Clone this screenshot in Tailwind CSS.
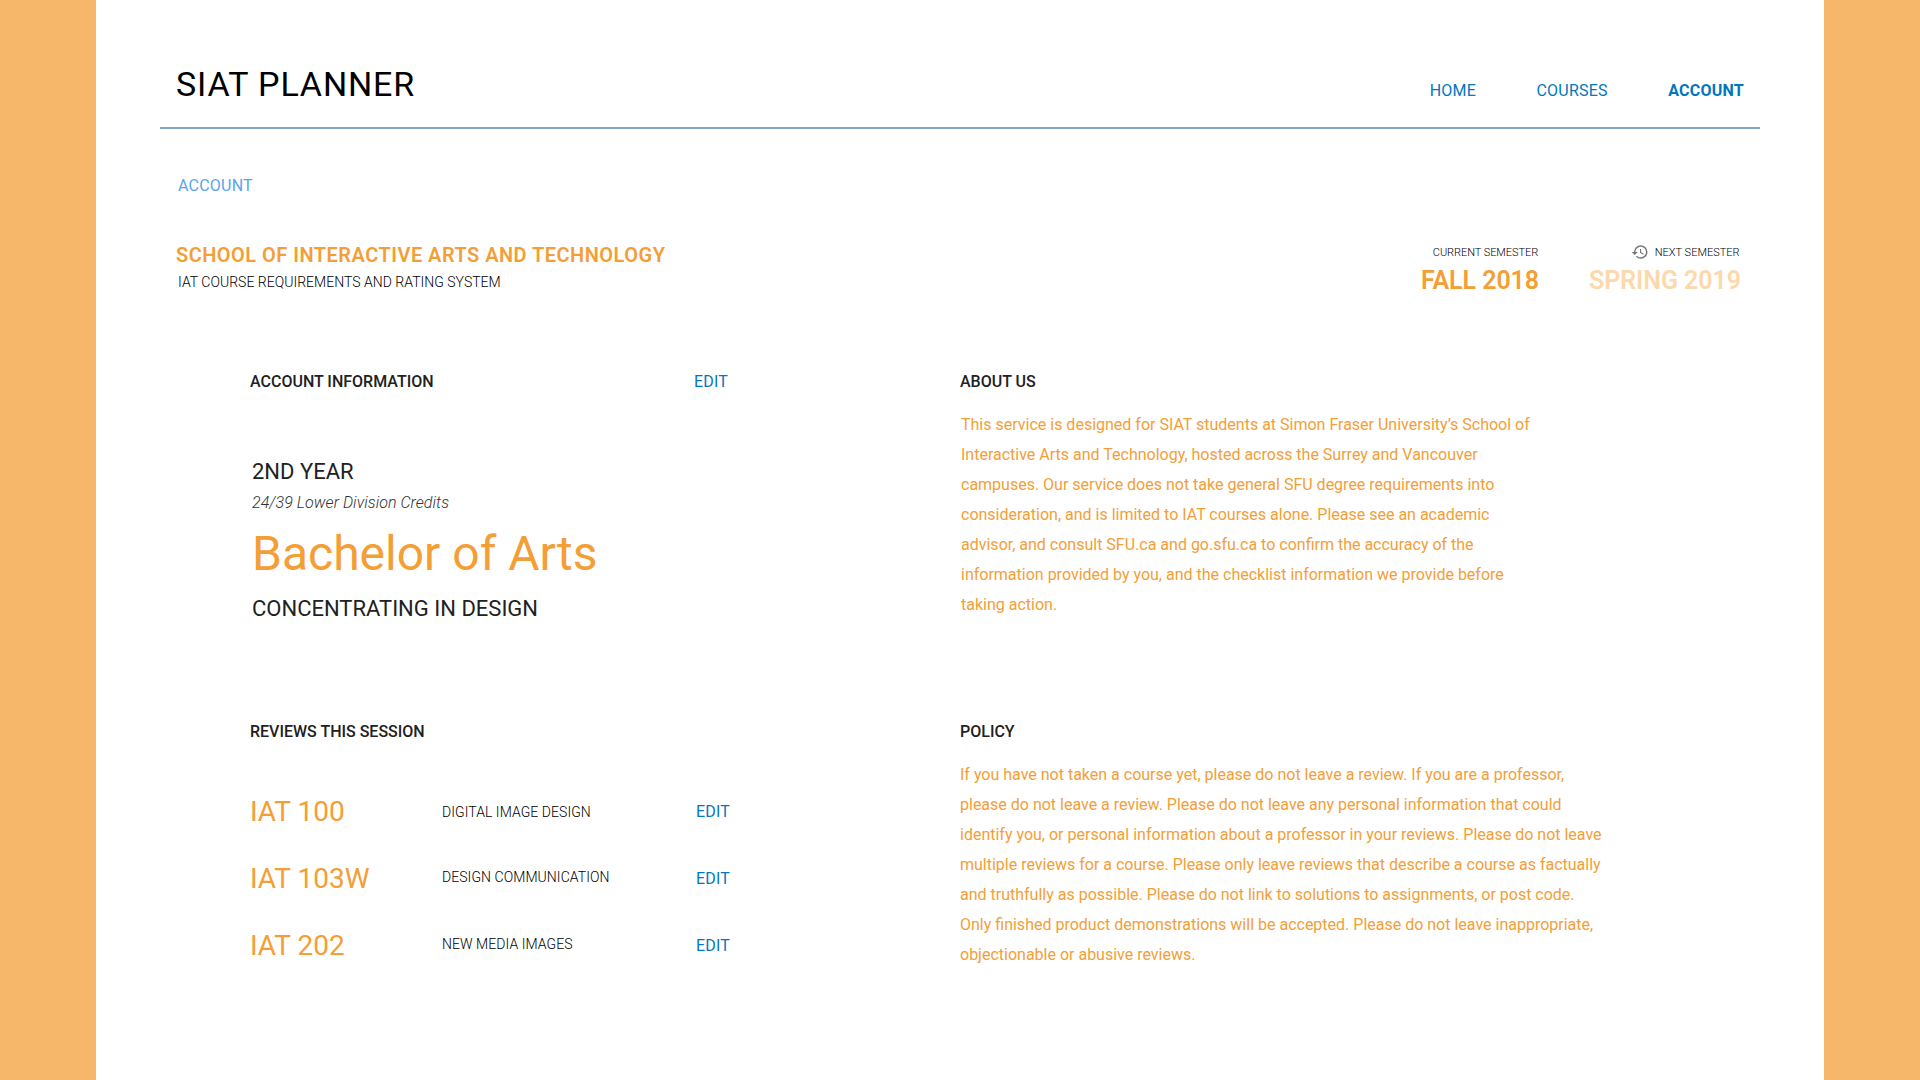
<!DOCTYPE html>
<html lang="en">
<head>
<meta charset="utf-8">
<title>SIAT Planner</title>
<script src="https://cdn.jsdelivr.net/npm/@tailwindcss/browser@4"></script>
</head>
<body class="h-screen overflow-hidden bg-[#f7b76b] px-24 font-['Roboto',sans-serif] text-[#212121]">
<div class="h-full bg-white px-16">
  <header class="flex h-[129px] items-baseline justify-between border-b-2 border-[#7fa6c5] px-4 pt-16">
    <h1 class="text-[34px] leading-10 tracking-[0.85px] text-black">SIAT PLANNER</h1>
    <nav class="flex gap-[60.5px] text-base leading-6 tracking-[0.2px] text-[#0277bd]">
      <a>HOME</a>
      <a>COURSES</a>
      <a class="font-bold tracking-[0.25px]">ACCOUNT</a>
    </nav>
  </header>

  <p class="mt-[45px] pl-[18px] text-base leading-6 tracking-[0.22px] text-[#5aa4ee]">ACCOUNT</p>

  <section class="mt-[43px] flex h-[51px] justify-between pr-[19px] pl-4">
    <div>
      <h2 class="text-xl leading-7 font-semibold tracking-[0.47px] text-[#f49e36]">SCHOOL OF INTERACTIVE ARTS AND TECHNOLOGY</h2>
      <p class="mt-[3px] pl-0.5 text-sm leading-5 font-light tracking-[0.02px] text-black">IAT COURSE REQUIREMENTS AND RATING SYSTEM</p>
    </div>
    <div class="flex gap-[50px] pt-1 text-right">
      <div>
        <p class="pr-px text-[11px] leading-4 font-light tracking-[-0.06px] text-black">CURRENT SEMESTER</p>
        <p class="mt-1 text-[25px] leading-8 font-semibold tracking-[-0.05px] text-[#f49e36]">FALL 2018</p>
      </div>
      <div>
        <div class="flex h-4 items-center justify-end gap-1.5 pr-[1.5px]">
          <svg class="mb-0.5 size-[18px]" viewBox="0 0 24 24" fill="#757575"><path d="M13 3a9 9 0 0 0-9 9H1l3.89 3.89.07.14L9 12H6c0-3.87 3.13-7 7-7s7 3.13 7 7-3.13 7-7 7c-1.93 0-3.68-.79-4.94-2.06l-1.42 1.42A8.954 8.954 0 0 0 13 21a9 9 0 0 0 0-18zm-1 5v5l4.28 2.54.72-1.21-3.5-2.08V8H12z"/></svg>
          <p class="text-[11px] leading-4 font-light text-black">NEXT SEMESTER</p>
        </div>
        <p class="mt-1 text-[25px] leading-8 font-semibold tracking-[-0.05px] text-[#fcd8ab]">SPRING 2019</p>
      </div>
    </div>
  </section>

  <main class="mt-[78px] grid grid-cols-[710px_1fr] grid-rows-[350px_350px] pl-[90px]">
    <section>
      <div class="flex w-[478px] justify-between text-base leading-6">
        <h3 class="font-medium">ACCOUNT INFORMATION</h3>
        <a class="tracking-[0.2px] text-[#0277bd]">EDIT</a>
      </div>
      <div class="mt-16 pl-0.5">
        <p class="text-[22px] leading-7">2ND YEAR</p>
        <p class="mt-[5px] text-base leading-6 font-light tracking-[0.06px] text-[#333] italic">24/39 Lower Division Credits</p>
        <p class="mt-[11px] text-5xl leading-14 text-[#f49e36]">Bachelor of Arts</p>
        <p class="mt-[13px] text-[22px] leading-7">CONCENTRATING IN DESIGN</p>
      </div>
    </section>

    <section>
      <h3 class="text-base leading-6 font-medium">ABOUT US</h3>
      <p class="mt-4 pl-px text-base leading-[30px] text-[#f49e36]">This service is designed for SIAT students at Simon Fraser University’s School of<br>Interactive Arts and Technology, hosted across the Surrey and Vancouver<br>campuses. Our service does not take general SFU degree requirements into<br>consideration, and is limited to IAT courses alone. Please see an academic<br>advisor, and consult SFU.ca and go.sfu.ca to confirm the accuracy of the<br>information provided by you, and the checklist information we provide before<br>taking action.</p>
    </section>

    <section>
      <h3 class="text-base leading-6 font-medium">REVIEWS THIS SESSION</h3>
      <ul class="mt-[50px] flex w-[480px] flex-col gap-[31px]">
        <li class="flex h-9">
          <span class="w-48 text-[28px] leading-9 text-[#f49e36]">IAT 100</span>
          <span class="grow pt-2 text-sm leading-5 font-light tracking-[0.06px] text-black">DIGITAL IMAGE DESIGN</span>
          <a class="pt-1.5 text-base leading-6 tracking-[0.2px] text-[#0277bd]">EDIT</a>
        </li>
        <li class="flex h-9">
          <span class="w-48 text-[28px] leading-9 text-[#f49e36]">IAT 103W</span>
          <span class="grow pt-1.5 text-sm leading-5 font-light tracking-[0.06px] text-black">DESIGN COMMUNICATION</span>
          <a class="pt-1.5 text-base leading-6 tracking-[0.2px] text-[#0277bd]">EDIT</a>
        </li>
        <li class="flex h-9">
          <span class="w-48 text-[28px] leading-9 text-[#f49e36]">IAT 202</span>
          <span class="grow pt-1.5 text-sm leading-5 font-light tracking-[0.06px] text-black">NEW MEDIA IMAGES</span>
          <a class="pt-1.5 text-base leading-6 tracking-[0.2px] text-[#0277bd]">EDIT</a>
        </li>
      </ul>
    </section>

    <section>
      <h3 class="text-base leading-6 font-medium">POLICY</h3>
      <p class="mt-4 text-base leading-[30px] text-[#f49e36]">If you have not taken a course yet, please do not leave a review. If you are a professor,<br>please do not leave a review. Please do not leave any personal information that could<br>identify you, or personal information about a professor in your reviews. Please do not leave<br>multiple reviews for a course. Please only leave reviews that describe a course as factually<br>and truthfully as possible. Please do not link to solutions to assignments, or post code.<br>Only finished product demonstrations will be accepted. Please do not leave inappropriate,<br>objectionable or abusive reviews.</p>
    </section>
  </main>
</div>
</body>
</html>
